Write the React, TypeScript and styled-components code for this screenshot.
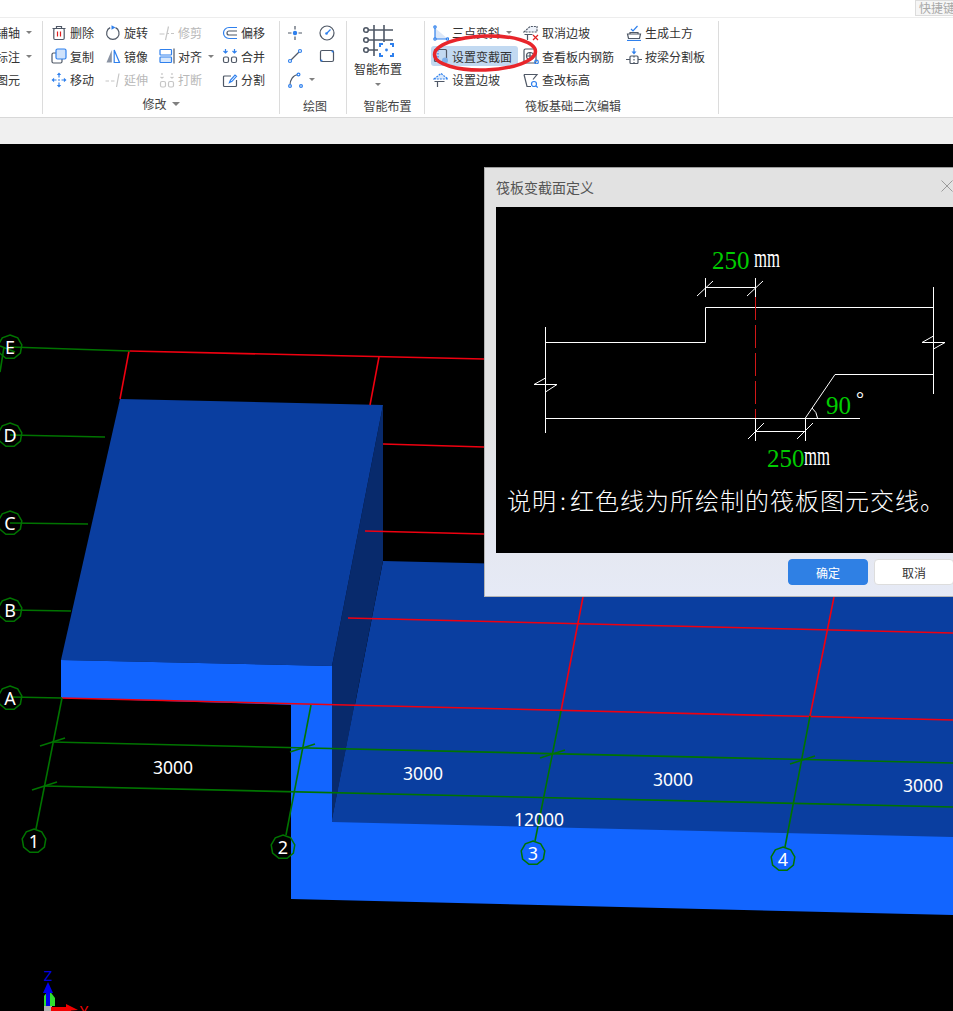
import * as React from 'react'
import styled, { createGlobalStyle } from 'styled-components'

const GlobalStyle = createGlobalStyle`
  html, body {
    margin: 0;
    padding: 0;
    background: #000;
    overflow: hidden;
  }
  body {
    font-family: 'Noto Sans CJK SC', 'Noto Sans', sans-serif;
  }
`

const UI_BLUE = '#2f80ed'
const UI_GRAY = '#4f5866'
const OFF = '#c6c6c6'
const LINE_GREEN = '#007400'
const LINE_RED = '#f00010'

/* ---------- page frame ---------- */

const Page = styled.div`
  width: 953px;
  height: 1011px;
  display: flex;
  flex-direction: column;
  overflow: hidden;
`
const TopBar = styled.div`
  height: 18px;
  box-sizing: border-box;
  background: #fff;
  border-bottom: 1px solid #ededed;
  display: flex;
  justify-content: flex-end;
  align-items: flex-start;
`
const Shortcut = styled.div`
  width: 38px;
  height: 16px;
  box-sizing: border-box;
  padding-left: 3px;
  background: #f6f6f6;
  border: 1px solid #dcdcdc;
  border-right: none;
  color: #a8a8a8;
  font-size: 12px;
  line-height: 14px;
  white-space: nowrap;
  overflow: hidden;
`
const Ribbon = styled.div`
  position: relative;
  height: 100px;
  box-sizing: border-box;
  padding-top: 3px;
  background: #fff;
  border-bottom: 1px solid #d8d8d8;
  display: flex;
  align-items: flex-start;
`
const Strip = styled.div`
  height: 26px;
  background: #f0f0f0;
`
const Group = styled.div<{ $width: number; $pad?: number }>`
  width: ${p => p.$width}px;
  height: 93px;
  box-sizing: border-box;
  padding-left: ${p => p.$pad ?? 0}px;
  border-right: 1px solid #dcdcdc;
  display: flex;
  flex-direction: column;
  overflow: hidden;
`
const Tools = styled.div<{ $cols: string }>`
  display: grid;
  grid-template-columns: ${p => p.$cols};
  grid-auto-rows: 23.5px;
  align-items: center;
`
const Tool = styled.div<{ $off?: boolean; $active?: boolean }>`
  height: 20px;
  display: flex;
  align-items: center;
  justify-self: start;
  gap: 3px;
  font-size: 12px;
  white-space: nowrap;
  color: ${p => (p.$off ? '#b8b8b8' : '#333')};
  background: ${p => (p.$active ? '#c2d9f1' : 'transparent')};
  border-radius: 3px;
  margin-left: ${p => (p.$active ? '-2px' : '0')};
  padding: ${p => (p.$active ? '0 6px 0 2px' : '0')};
`
const Caret = styled.span<{ $big?: boolean }>`
  width: 0;
  height: 0;
  margin-left: ${p => (p.$big ? '5px' : '3px')};
  border-left: ${p => (p.$big ? 4 : 3)}px solid transparent;
  border-right: ${p => (p.$big ? 4 : 3)}px solid transparent;
  border-top: ${p => (p.$big ? 4 : 3)}px solid #808080;
`
const GroupLabel = styled.div<{ $shift?: number; $lift?: number }>`
  margin-top: auto;
  margin-left: ${p => p.$shift ?? 0}px;
  margin-bottom: ${p => p.$lift ?? 0}px;
  height: 16px;
  display: flex;
  justify-content: center;
  align-items: center;
  font-size: 12px;
  line-height: 16px;
  color: #444;
`
const LeftClip = styled.div`
  margin-left: -4px;
`
const BigTool = styled.div`
  width: 48px;
  display: flex;
  flex-direction: column;
  align-items: center;
  font-size: 12px;
  color: #333;
  padding-top: 4px;
`
const BigName = styled.div`
  margin-top: 3px;
  line-height: 16px;
`
const BigCaret = styled(Caret)`
  margin: 6px 0 0;
`
const Mark = styled.svg`
  position: absolute;
  left: 430px;
  top: 14px;
  pointer-events: none;
`
const Glyph = styled.svg`
  width: 16px;
  height: 16px;
  flex: none;
  fill: none;
  stroke-width: 1.2;
`

/* ---------- viewport and dialog ---------- */

const Viewport = styled.div`
  position: relative;
  flex: 1;
  background: #000;
  overflow: hidden;
`
const Scene = styled.svg`
  display: block;
`
const SceneText = styled.text`
  font-family: 'Noto Sans', sans-serif;
  fill: #fff;
`
const Dialog = styled.div`
  position: absolute;
  left: 484px;
  top: 23px;
  width: 471px;
  height: 430px;
  box-sizing: border-box;
  padding-left: 11px;
  border: 1px solid #b4b4b4;
  border-top-color: #9c9c9c;
  background: linear-gradient(180deg, #e2e2e2 0%, #e2e2e2 55%, #e6eaf6 100%);
  display: flex;
  flex-direction: column;
`
const TitleRow = styled.div`
  height: 39px;
  box-sizing: border-box;
  padding-bottom: 2px;
  flex: none;
  display: flex;
  justify-content: space-between;
  align-items: center;
  font-size: 14px;
  color: #555;
`
const CloseMark = styled.svg`
  margin-right: 1px;
  margin-top: -2px;
`
const Pane = styled.svg`
  display: block;
  flex: none;
  background: #000;
`
const PaneNote = styled.text`
  font-family: 'Noto Sans CJK SC', 'Liberation Serif', serif;
  font-size: 24px;
  font-weight: 300;
  letter-spacing: 1px;
  fill: #fff;
`
const PaneNum = styled.text<{ $white?: boolean }>`
  font-family: 'Liberation Serif', serif;
  font-size: ${p => (p.$white ? 28 : 25)}px;
  fill: ${p => (p.$white ? '#fff' : '#0c0')};
`
const PaneDegree = styled.text`
  font-family: 'Liberation Serif', serif;
  font-size: 20px;
  fill: #fff;
`
const ButtonRow = styled.div`
  display: flex;
  justify-content: flex-end;
  gap: 6px;
  padding-top: 6px;
`
const DialogButton = styled.div<{ $primary?: boolean }>`
  width: 80px;
  height: 26px;
  box-sizing: border-box;
  display: flex;
  justify-content: center;
  align-items: center;
  border-radius: 4px;
  font-size: 12px;
  background: ${p => (p.$primary ? '#2f80e4' : '#fff')};
  color: ${p => (p.$primary ? '#fff' : '#333')};
  border: 1px solid ${p => (p.$primary ? '#2f80e4' : '#ddd')};
`

/* ---------- ribbon icons ---------- */

const icons: Record<string, React.ReactNode> = {
  trash: (
    <>
      <path d="M1.5 3.5h13M5.5 3.5V1.5h5v2" stroke={UI_GRAY} />
      <rect x="2.8" y="3.5" width="10.4" height="11" rx="1.2" stroke={UI_GRAY} />
      <path d="M6.5 6.5v5M9.5 6.5v5" stroke="#e02020" />
    </>
  ),
  copy: (
    <>
      <path d="M5 5H2.5A1.5 1.5 0 0 0 1 6.5v7A1.5 1.5 0 0 0 2.5 15h7a1.5 1.5 0 0 0 1.5-1.5V11" stroke={UI_GRAY} />
      <rect x="5" y="1" width="10" height="10" rx="1.5" fill="#cfe2fb" stroke={UI_BLUE} />
    </>
  ),
  move: (
    <>
      <path d="M8 3v2.5M8 10.5V13M3 8h2.5M10.5 8H13M7 8h2" stroke={UI_BLUE} />
      <path d="M8 .5l2.2 2.6H5.800zM8 15.500l2.200-2.600H5.800zM.5 8l2.600-2.200v4.400zM15.500 8l-2.600-2.200v4.400z" fill={UI_BLUE} />
    </>
  ),
  rotate: (
    <>
      <path d="M10.500 2.600A6.200 6.200 0 1 1 5.200 2.600" stroke={UI_GRAY} />
      <path d="M6.500.2l4 2.300-4 2.300z" fill={UI_BLUE} />
    </>
  ),
  mirror: (
    <>
      <path d="M6.800 2L1.500 14.500h5.300z" fill="#8a93a3" />
      <path d="M9.200 2l5.300 12.500H9.200z" stroke={UI_BLUE} />
    </>
  ),
  extend: <path d="M.5 9h3.500M6 9h3.500M14 1.500l-2.500 13.500" stroke={OFF} />,
  trim: <path d="M.5 9h5M8 8.500h2M12 8.500h3M9.500 1.500L6.500 15" stroke={OFF} />,
  align: (
    <>
      <rect x="1" y="1.500" width="11.500" height="5.500" rx=".8" stroke={UI_BLUE} />
      <rect x="1" y="9" width="11.500" height="5.500" rx=".8" fill="#d8e8fc" stroke={UI_BLUE} />
      <path d="M15 .5v15" stroke={UI_GRAY} />
    </>
  ),
  cut: (
    <>
      <path d="M3 1v2M1.500 5l1.500 1 1.500-1M13 1v2M11.500 5l1.500 1 1.500-1" stroke={OFF} />
      <rect x="1.500" y="9.500" width="5" height="5.500" rx="1.500" stroke={OFF} />
      <rect x="9.500" y="9.500" width="5" height="5.500" rx="1.500" stroke={OFF} />
    </>
  ),
  offset: (
    <>
      <path d="M15 2.500H7a5.500 5.500 0 0 0 0 11h8" stroke={UI_BLUE} />
      <path d="M15 6H7a2 2 0 0 0 0 4h8" stroke={UI_GRAY} />
    </>
  ),
  merge: (
    <>
      <path d="M3.500 1v3.500M1.500 3l2 2 2-2M12.500 1v3.500M10.500 3l2 2 2-2" stroke={UI_BLUE} />
      <rect x="1.500" y="9" width="5" height="5.500" rx="1.500" stroke={UI_GRAY} />
      <rect x="9.500" y="9" width="5" height="5.500" rx="1.500" stroke={UI_GRAY} />
    </>
  ),
  split: (
    <>
      <path d="M9 4H2.500a1 1 0 0 0-1 1v8.500a1 1 0 0 0 1 1h11a1 1 0 0 0 1-1V8" stroke={UI_GRAY} />
      <path d="M7.500 10.500l1-2.500 4.500-5 1.500 1.300-4.500 5z" stroke={UI_BLUE} />
    </>
  ),
  point: (
    <>
      <path d="M8 1v3.500M8 11.500V15M1 8h3.500M11.500 8H15" stroke={UI_GRAY} />
      <circle cx="8" cy="8" r="2.200" fill={UI_BLUE} />
    </>
  ),
  circle: (
    <>
      <circle cx="8" cy="8" r="7" stroke={UI_GRAY} />
      <path d="M8 8l3.500-3.500" stroke={UI_BLUE} />
      <circle cx="7.500" cy="8.500" r="1.300" fill={UI_BLUE} />
    </>
  ),
  line: (
    <>
      <path d="M3.500 12.500L12.500 3.500" stroke={UI_GRAY} />
      <circle cx="3" cy="13" r="1.500" fill="#fff" stroke={UI_BLUE} />
      <circle cx="13" cy="3" r="1.500" fill="#fff" stroke={UI_BLUE} />
    </>
  ),
  rect: (
    <>
      <rect x="1.500" y="2.500" width="13" height="11" rx="1.500" stroke={UI_GRAY} />
      <circle cx="13.500" cy="3.500" r="1" fill={UI_BLUE} />
      <circle cx="2.500" cy="12.500" r="1" fill={UI_BLUE} />
    </>
  ),
  arc: (
    <>
      <path d="M3 13C3 8 6 3 11 2.500" stroke={UI_GRAY} />
      <circle cx="3" cy="14" r="1.400" fill="#fff" stroke={UI_BLUE} />
      <circle cx="11.500" cy="2.500" r="1.400" fill="#fff" stroke={UI_BLUE} />
      <circle cx="14" cy="14" r="1.400" fill="#fff" stroke={UI_BLUE} />
    </>
  ),
  threePoint: (
    <>
      <path d="M2 3L15 14H2z" fill="#dde8f8" />
      <path d="M2 1.500V14h13" stroke={UI_BLUE} />
      <circle cx="2" cy="2" r="1.200" fill="#fff" stroke={UI_BLUE} />
      <circle cx="2" cy="14" r="1.200" fill="#fff" stroke={UI_BLUE} />
      <circle cx="14.500" cy="14" r="1.200" fill="#fff" stroke={UI_BLUE} />
    </>
  ),
  section: (
    <>
      <rect x="1.500" y="1.500" width="12" height="12" rx="1" stroke={UI_GRAY} />
      <path d="M5 2v11" stroke={UI_BLUE} strokeDasharray="1.500 1.500" />
      <circle cx="12" cy="12.500" r="3" fill="#7fb0ea" />
    </>
  ),
  slope: (
    <>
      <path d="M1 7L8 1.500 15 7z" fill="#dbe9fb" stroke={UI_BLUE} strokeDasharray="2 1" />
      <path d="M1.500 9.500h10M4.500 9.500V15" stroke={UI_GRAY} />
    </>
  ),
  cancelSlope: (
    <>
      <path d="M1 7L7 1.500h7V7z" fill="#eef3fb" stroke={UI_GRAY} strokeDasharray="2 1" />
      <path d="M1.500 9.500h8M4.500 9.500V15" stroke={UI_GRAY} />
      <path d="M10 10l5 5M15 10l-5 5" stroke="#e02020" />
    </>
  ),
  rebar: (
    <>
      <rect x="1" y="1" width="12" height="14" rx="1.500" stroke={UI_GRAY} />
      <circle cx="7" cy="8" r="3.500" stroke={UI_GRAY} />
      <path d="M7 4v8M3.500 8H11" stroke={UI_GRAY} />
      <circle cx="13.500" cy="14" r="1.800" stroke={UI_BLUE} />
    </>
  ),
  elevation: (
    <>
      <path d="M1 2.500h13l-4 5M1 2.500L4 14.500h4" stroke={UI_GRAY} />
      <circle cx="11" cy="12" r="2.500" stroke={UI_BLUE} />
      <path d="M13 14l1.800 1.500" stroke={UI_BLUE} />
    </>
  ),
  earth: (
    <>
      <path d="M5 4l2 2 4.500-5" stroke={UI_BLUE} />
      <path d="M4 9V7.500h8V9M1.500 9h13l-1 4.500H2.500z" stroke={UI_GRAY} />
      <path d="M1 15.500h14" stroke={UI_BLUE} />
    </>
  ),
  splitBeam: (
    <>
      <path d="M8 0v4" stroke={UI_BLUE} />
      <path d="M5.500 3.500h5L8 6.500z" fill={UI_BLUE} />
      <rect x="4" y="8" width="8" height="7.500" rx="1" stroke={UI_GRAY} />
      <path d="M8 8v7.500" stroke={UI_GRAY} strokeDasharray="1.500 1.500" />
      <path d="M0 11.500h4M12 11.500h4" stroke={UI_GRAY} />
    </>
  ),
}

type ToolDef = { icon: string; label?: string; caret?: boolean; off?: boolean; active?: boolean }

const editTools: ToolDef[] = [
  { icon: 'trash', label: '删除' },
  { icon: 'rotate', label: '旋转' },
  { icon: 'trim', label: '修剪', off: true },
  { icon: 'offset', label: '偏移' },
  { icon: 'copy', label: '复制' },
  { icon: 'mirror', label: '镜像' },
  { icon: 'align', label: '对齐', caret: true },
  { icon: 'merge', label: '合并' },
  { icon: 'move', label: '移动' },
  { icon: 'extend', label: '延伸', off: true },
  { icon: 'cut', label: '打断', off: true },
  { icon: 'split', label: '分割' },
]

const drawTools: ToolDef[] = [
  { icon: 'point' },
  { icon: 'circle' },
  { icon: 'line' },
  { icon: 'rect' },
  { icon: 'arc', caret: true },
]

const raftTools: ToolDef[] = [
  { icon: 'threePoint', label: '三点变斜', caret: true },
  { icon: 'cancelSlope', label: '取消边坡' },
  { icon: 'earth', label: '生成土方' },
  { icon: 'section', label: '设置变截面', active: true },
  { icon: 'rebar', label: '查看板内钢筋' },
  { icon: 'splitBeam', label: '按梁分割板' },
  { icon: 'slope', label: '设置边坡' },
  { icon: 'elevation', label: '查改标高' },
]

const ToolItem: React.FC<ToolDef> = ({ icon, label, caret, off, active }) => (
  <Tool $off={off} $active={active}>
    <Glyph viewBox="0 0 16 16">{icons[icon]}</Glyph>
    {label && <span>{label}</span>}
    {caret && <Caret />}
  </Tool>
)

/* ---------- model view data, in page coordinates ---------- */

const greenLines = [
  [10, 347, 130, 351], [10, 435, 105, 437], [10, 523, 88, 524], [10, 610, 71, 611], [10, 697, 62, 698],
  [4, 347, 0, 372], [0, 346, 15, 352],
  [62, 698, 36, 829], [311, 705, 286, 835], [561, 711, 535, 841], [810, 716, 785, 847],
  [52, 742, 953, 763], [44, 786, 953, 807],
  [40, 746, 65, 738], [290, 752, 315, 744], [540, 758, 565, 750], [790, 764, 815, 756], [32, 790, 57, 782],
]

const redLines = [
  [130, 351, 484, 359], [129, 351, 120, 399], [379, 357, 370, 405],
  [383, 444, 484, 447], [365, 531, 484, 534],
  [348, 618, 953, 633], [61, 698, 953, 720],
  [583, 597, 561, 711], [834, 597, 810, 716],
]

const bubbles: [number, number, string][] = [
  [10, 347, 'E'], [10, 435, 'D'], [10, 523, 'C'], [10, 610, 'B'], [10, 698, 'A'],
  [34, 841, '1'], [283, 847, '2'], [533, 853, '3'], [783, 859, '4'],
]

const dims: [number, number, string][] = [
  [173, 767, '3000'], [423, 773, '3000'], [673, 779, '3000'], [923, 785, '3000'], [539, 819, '12000'],
]

const ring = (cx: number, cy: number) =>
  Array.from({ length: 9 }, (_, i) => {
    const a = (i / 9) * Math.PI * 2 - Math.PI / 2
    return `${(cx + Math.cos(a) * 12).toFixed(1)},${(cy + Math.sin(a) * 12).toFixed(1)}`
  }).join(' ')

const ModelView: React.FC = () => (
  <Scene width={953} height={867} viewBox="0 144 953 867">
    <polygon points="291,704 953,720 953,915 291,899" fill="#1265ff" />
    <polygon points="383,561 953,575 953,837 332,822" fill="#0a3ea0" />
    <polygon points="383,405 383,561 332,822 332,666" fill="#082a6c" />
    <polygon points="120,399 383,405 332,666 61,660" fill="#0a3ea0" />
    <polygon points="61,660 332,666 332,706 61,698" fill="#1265ff" />
    {redLines.map(([a, b, c, d], i) => (
      <line key={i} x1={a} y1={b} x2={c} y2={d} stroke={LINE_RED} strokeWidth={1.6} />
    ))}
    {greenLines.map(([a, b, c, d], i) => (
      <line key={i} x1={a} y1={b} x2={c} y2={d} stroke={LINE_GREEN} strokeWidth={1.6} />
    ))}
    {bubbles.map(([x, y, t]) => (
      <g key={t}>
        <polygon points={ring(x, y)} fill="none" stroke={LINE_GREEN} strokeWidth={1.5} />
        <SceneText x={x} y={y + 7} fontSize={18} textAnchor="middle">{t}</SceneText>
      </g>
    ))}
    {dims.map(([x, y, t]) => (
      <SceneText key={`${x}-${t}`} x={x} y={y + 7} fontSize={17.500} textAnchor="middle">{t}</SceneText>
    ))}
    {/* axis triad, bottom left */}
    <path d="M44 996l5-6 6 8 0 8h-11z" fill="#2fe02f" />
    <rect x="44" y="1006" width="8" height="5" fill="#b0b0b0" />
    <rect x="46" y="988" width="4" height="18" fill="#0000f0" />
    <path d="M48 982l5 11h-10z" fill="#0000f0" />
    <rect x="51" y="1007" width="20" height="4" fill="#f00000" />
    <path d="M66 1004l12 6-12 1z" fill="#f00000" />
    <SceneText x={48} y={981} fontSize={15} textAnchor="middle" style={{ fill: '#0000e0' }}>Z</SceneText>
    <SceneText x={84} y={1016} fontSize={15} textAnchor="middle" style={{ fill: '#f00000' }}>Y</SceneText>
  </Scene>
)

const SectionDrawing: React.FC = () => (
  <Pane width={458} height={346} viewBox="496 207 458 346">
    <g fill="none" stroke="#fff" strokeWidth={1}>
      <path d="M545.500 342.500H705.500V307.500H933.500" />
      <path d="M545.500 327V433M545.500 418.500H860M933.500 287V394" />
      <path d="M805 418.500L835 374.500H933.500" />
      <path d="M705.500 278V297M755.500 278V297M705.500 287.500H755.500" />
      <path d="M697 296L713 281M747 296L763 281" />
      <path d="M755.500 418V441M805.500 418V441M755.500 431.500H805.500" />
      <path d="M748 439L764 423M797 439L813 423" />
      <path d="M534 384.500H557M534 384.500L545.500 378M557 384.500L545.500 392" />
      <path d="M922 342.500H945M922 342.500L933.500 336M945 342.500L933.500 349" />
      <path d="M812 408Q817 412 817.500 418" />
    </g>
    <line x1={755.500} y1={297} x2={755.500} y2={418} stroke="#d01818" strokeWidth={1} strokeDasharray="23 5" />
    <PaneNum x={712} y={269}>250</PaneNum>
    <PaneNum $white x={754} y={267} textLength={26} lengthAdjust="spacingAndGlyphs">mm</PaneNum>
    <PaneNum x={767} y={467}>250</PaneNum>
    <PaneNum $white x={804} y={465} textLength={26} lengthAdjust="spacingAndGlyphs">mm</PaneNum>
    <PaneNum x={826} y={414}>90</PaneNum>
    <PaneDegree x={856} y={406}>°</PaneDegree>
    <PaneNote x={507} y={510}>
      说明<tspan dx={3}>:</tspan><tspan dx={3}>红色线为所绘制的筏板图元交线。</tspan>
    </PaneNote>
  </Pane>
)

export default function App() {
  return (
    <Page>
      <GlobalStyle />
      <TopBar>
        <Shortcut>快捷键</Shortcut>
      </TopBar>
      <Ribbon>
        <Group $width={43}>
          <LeftClip>
            <Tools $cols="auto">
              <Tool>辅轴<Caret /></Tool>
              <Tool>标注<Caret /></Tool>
              <Tool>图元</Tool>
            </Tools>
          </LeftClip>
        </Group>
        <Group $width={237} $pad={8}>
          <Tools $cols="54px 54px 63px auto">
            {editTools.map(t => <ToolItem key={t.icon} {...t} />)}
          </Tools>
          <GroupLabel $shift={-8} $lift={2}>修改<Caret $big /></GroupLabel>
        </Group>
        <Group $width={67} $pad={7}>
          <Tools $cols="32px 28px">
            {drawTools.map(t => <ToolItem key={t.icon} {...t} />)}
          </Tools>
          <GroupLabel $shift={-3}>绘图</GroupLabel>
        </Group>
        <Group $width={78} $pad={7}>
          <BigTool>
            <svg width="31" height="33" viewBox="0 0 31 33" fill="none" strokeWidth="1.600">
              <path d="M11 0v31M21 0v17M6 5h24M6 15h24M6 25h9" stroke={UI_GRAY} />
              <circle cx="3" cy="5" r="2.300" stroke={UI_GRAY} />
              <circle cx="3" cy="15" r="2.300" stroke={UI_GRAY} />
              <circle cx="3" cy="25" r="2.300" stroke={UI_GRAY} />
              <path d="M17 22v-3h3M27 19h3v3M30 28v3h-3M20 31h-3v-3" stroke={UI_BLUE} strokeWidth="2" />
              <circle cx="23.500" cy="25" r="1.400" fill={UI_BLUE} />
            </svg>
            <BigName>智能布置</BigName>
            <BigCaret />
          </BigTool>
          <GroupLabel $shift={-3}>智能布置</GroupLabel>
        </Group>
        <Group $width={294} $pad={8}>
          <Tools $cols="90px 103px auto">
            {raftTools.map(t => <ToolItem key={t.icon} {...t} />)}
          </Tools>
          <GroupLabel $shift={-5}>筏板基础二次编辑</GroupLabel>
        </Group>
        <Mark width="114" height="44" viewBox="0 0 114 44">
          <ellipse cx="55" cy="21" rx="50.500" ry="17" fill="none" stroke="#e8252b" strokeWidth="3.500" transform="rotate(-2 55 21)" />
        </Mark>
      </Ribbon>
      <Strip />
      <Viewport>
        <ModelView />
        <Dialog>
          <TitleRow>
            筏板变截面定义
            <CloseMark width="12" height="12" viewBox="0 0 12 12">
              <path d="M.5.5l11 11M11.500.5l-11 11" stroke="#9a9a9a" strokeWidth="1" />
            </CloseMark>
          </TitleRow>
          <SectionDrawing />
          <ButtonRow>
            <DialogButton $primary>确定</DialogButton>
            <DialogButton>取消</DialogButton>
          </ButtonRow>
        </Dialog>
      </Viewport>
    </Page>
  )
}
